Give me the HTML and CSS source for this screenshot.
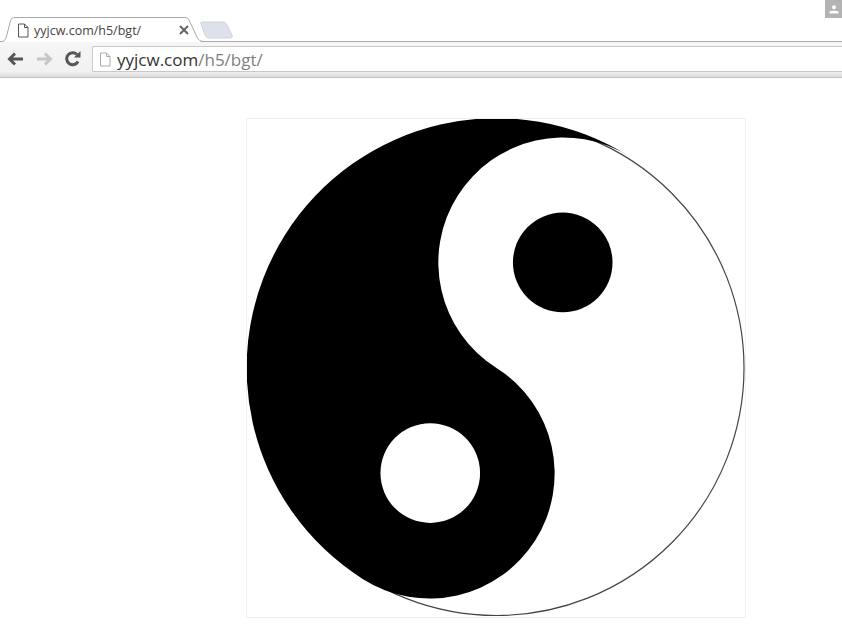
FILE: index.html
```html
<!DOCTYPE html>
<html lang="en">
<head>
    <meta charset="UTF-8">
    <title>yyjcw.com/h5/bgt/</title>
    <link rel="stylesheet" href="styles.css">
</head>
<body>
    <div class="browser">
        <div class="tabstrip">
            <svg class="tab-shape" width="240" height="30" viewBox="0 0 240 30">
                <path d="M201 11C200 9.500 201 9 203 9H222C225 9 226 10 227 12L232 22C233 25 231 25 230 25H210C207 25 206 24 205 22Z" fill="#dde1e9" stroke="#cfd3da"/>
                <path d="M2 29C4 29 5 27 6 25L10.500 8C11.500 5 12.500 4 15 4H184C187 4 188 5 189 7L197 24C198.500 27 200 29 204 29Z" fill="#fff"/>
                <path d="M0 28.500H2C4 28.500 5 27 6 25L10.500 8C11.500 5 12.500 4.500 15 4.500H184C187 4.500 188 5 189 7L197 24C198.500 27 200 28.500 204 28.500H240" fill="none" stroke="#a9a9a9"/>
            </svg>
            <div class="tab">
                <svg class="page-icon" width="12" height="15" viewBox="0 0 12 15">
                    <path d="M1.500 1H7.500L11 4.500V14H1.500ZM7.500 1V4.500H11" fill="#fff" stroke="#555"/>
                </svg>
                <span class="tab-title">yyjcw.com/h5/bgt/</span>
                <svg class="tab-close" width="10" height="10" viewBox="0 0 10 10">
                    <path d="M1 1L9 9M9 1L1 9" stroke="#666" stroke-width="2"/>
                </svg>
            </div>
            <div class="profile">
                <svg width="10" height="9" viewBox="0 0 10 9">
                    <circle cx="5" cy="2.200" r="2" fill="#fff"/>
                    <path d="M0.500 8.500V6.500C2 5.500 8 5.500 9.500 6.500V8.500Z" fill="#fff"/>
                </svg>
            </div>
        </div>
        <div class="toolbar">
            <svg class="nav-icon" width="17" height="14" viewBox="0 0 17 14">
                <path d="M16 7H3M8 1.500L2.500 7L8 12.500" fill="none" stroke="#555" stroke-width="3"/>
            </svg>
            <svg class="nav-icon" width="17" height="14" viewBox="0 0 17 14">
                <path d="M1 7H14M9 1.500L14.500 7L9 12.500" fill="none" stroke="#c6c6c6" stroke-width="3"/>
            </svg>
            <svg class="nav-icon" width="16" height="16" viewBox="0 0 16 16">
                <path d="M13 10.500A6 6 0 1 1 12 3.500" fill="none" stroke="#555" stroke-width="3"/>
                <path d="M9 6.500H15.500V0Z" fill="#555"/>
            </svg>
            <div class="omnibox">
                <svg class="page-icon" width="12" height="15" viewBox="0 0 12 15">
                    <path d="M1.500 1H7.500L11 4.500V14H1.500ZM7.500 1V4.500H11" fill="#fff" stroke="#aaa"/>
                </svg>
                <span class="host">yyjcw.com</span><span class="path">/h5/bgt/</span>
            </div>
        </div>
    </div>

    <div class="stage">
        <svg class="taiji" width="500" height="500" viewBox="246 118 500 500">
            <circle cx="496.500" cy="368" r="248.500" fill="#fff" stroke="#444" stroke-width="1.200"/>
            <path d="M362.500 580A249 249 0 1 1 630.500 156A125 125 0 0 0 496.500 368A125 125 0 0 1 362.500 580Z" fill="#000"/>
            <circle cx="563" cy="262" r="50" fill="#000"/>
            <circle cx="430" cy="473.500" r="50" fill="#fff"/>
        </svg>
    </div>
</body>
</html>
```
FILE: styles.css
```css
* { margin: 0; padding: 0; box-sizing: border-box; }
html, body { background: white; overflow: hidden; }
body { font-family: 'Open Sans', 'Liberation Sans', sans-serif; }

.browser { height: 78px; }
.tabstrip { height: 41px; position: relative; }
.tab-shape { position: absolute; left: 0; top: 13px; }
.tab { position: absolute; left: 17px; top: 22px; display: flex; align-items: center; width: 172px; height: 16px; }
.tab-title { font-size: 12.500px; color: #444; margin-left: 5px; }
.tab-close { margin-left: auto; }
.profile { position: absolute; right: 0; top: 0; width: 17px; height: 18px; background: #b3b3b3; display: flex; align-items: center; justify-content: center; }

.toolbar { height: 37px; display: flex; align-items: center; padding: 4px 0 5px 7px; background: linear-gradient(#f6f6f6, #f1f1f1 85%, #dcdcdc); border-top: 1px solid #a9a9a9; border-bottom: 1px solid #c4c4c4; }
.nav-icon { margin-right: 12px; flex: none; }
.nav-icon + .nav-icon + .nav-icon { margin-right: 11px; }
.omnibox { flex: 1; height: 26px; display: flex; align-items: center; padding-left: 6px; background: white; border: 1px solid #c8c8c8; border-right: none; border-radius: 2px 0 0 2px; font-size: 17px; }
.omnibox .page-icon { margin-right: 6px; }
.host { color: #333; }
.path { color: #808080; }

.stage { padding: 40px 0 0 246px; }
.taiji { display: block; border: 1px solid #f0f0f0; }
```
